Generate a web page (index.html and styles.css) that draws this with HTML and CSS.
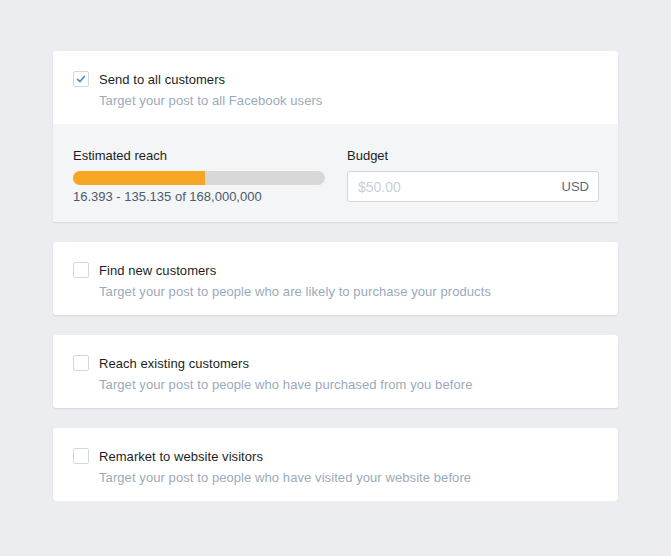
FILE: index.html
```html
<!DOCTYPE html>
<html>
<head>
<meta charset="utf-8">
<link rel="stylesheet" href="styles.css">
</head>
<body>
<div class="list">
  <div class="card">
    <div class="option">
      <span class="check checked"><svg viewBox="0 0 16 16" width="16" height="16"><path d="M4.5 8.3 L7 10.6 L11.3 5.4" fill="none" stroke="#3b8fd6" stroke-width="1.6" stroke-linecap="round" stroke-linejoin="round"/></svg></span>
      <div class="texts">
        <div class="title">Send to all customers</div>
        <div class="sub">Target your post to all Facebook users</div>
      </div>
    </div>
    <div class="details">
      <div class="col">
        <div class="label">Estimated reach</div>
        <div class="bar"><div class="fill" style="width:52.4%"></div></div>
        <div class="range">16.393 - 135.135 of 168,000,000</div>
      </div>
      <div class="col">
        <div class="label">Budget</div>
        <div class="input"><span class="ph">$50.00</span><span class="cur">USD</span></div>
      </div>
    </div>
  </div>
  <div class="card">
    <div class="option">
      <span class="check"></span>
      <div class="texts">
        <div class="title">Find new customers</div>
        <div class="sub">Target your post to people who are likely to purchase your products</div>
      </div>
    </div>
  </div>
  <div class="card">
    <div class="option">
      <span class="check"></span>
      <div class="texts">
        <div class="title">Reach existing customers</div>
        <div class="sub">Target your post to people who have purchased from you before</div>
      </div>
    </div>
  </div>
  <div class="card">
    <div class="option">
      <span class="check"></span>
      <div class="texts">
        <div class="title">Remarket to website visitors</div>
        <div class="sub">Target your post to people who have visited your website before</div>
      </div>
    </div>
  </div>
</div>
</body>
</html>
```

FILE: styles.css
```css
html, body {
  margin: 0;
  padding: 0;
  background: #ebedf0;
  font-family: "Liberation Sans", Arial, sans-serif;
  font-size: 13px;
}
.list {
  padding: 51px 53px 0 53px;
  display: flex;
  flex-direction: column;
  gap: 20px;
}
.card {
  background: #fff;
  border-radius: 3px;
  box-shadow: 0 1px 2px rgba(0, 0, 0, 0.1);
  overflow: hidden;
}
.option {
  display: flex;
  gap: 10px;
  padding: 20px 20px 0 20px;
  height: 53px;
}
.check {
  width: 14px;
  height: 14px;
  border: 1px solid #d3d8de;
  border-radius: 2px;
  background: #fff;
  flex: none;
  display: flex;
  align-items: center;
  justify-content: center;
}
.check svg { display: block; flex: none; }
.texts { line-height: 21px; margin-top: -2px; }
.title { color: #1b1f24; letter-spacing: 0.05px; }
.sub { color: #9aaabb; letter-spacing: 0.08px; }
.details {
  background: #f4f5f7;
  border-top: 1px solid #f6f7f8;
  display: flex;
  gap: 22px;
  padding: 23px 19px 17px 20px;
}
.col { flex: 1; }
.label {
  color: #1b1f24;
  line-height: 16px;
  margin-bottom: 7px;
}
.bar {
  height: 14px;
  background: #d8d8d8;
  border-radius: 7px;
  overflow: hidden;
}
.fill {
  height: 100%;
  background: #f6a623;
}
.range {
  color: #4b5a6e;
  margin-top: 4px;
  line-height: 16px;
}
.input {
  height: 29px;
  background: #fff;
  border: 1px solid #d3d8de;
  border-radius: 3px;
  display: flex;
  align-items: center;
  justify-content: space-between;
  padding: 0 9px 0 10px;
  font-size: 14px;
}
.ph { color: #c8d0da; }
.cur { color: #5a6878; font-size: 13px; }
```
